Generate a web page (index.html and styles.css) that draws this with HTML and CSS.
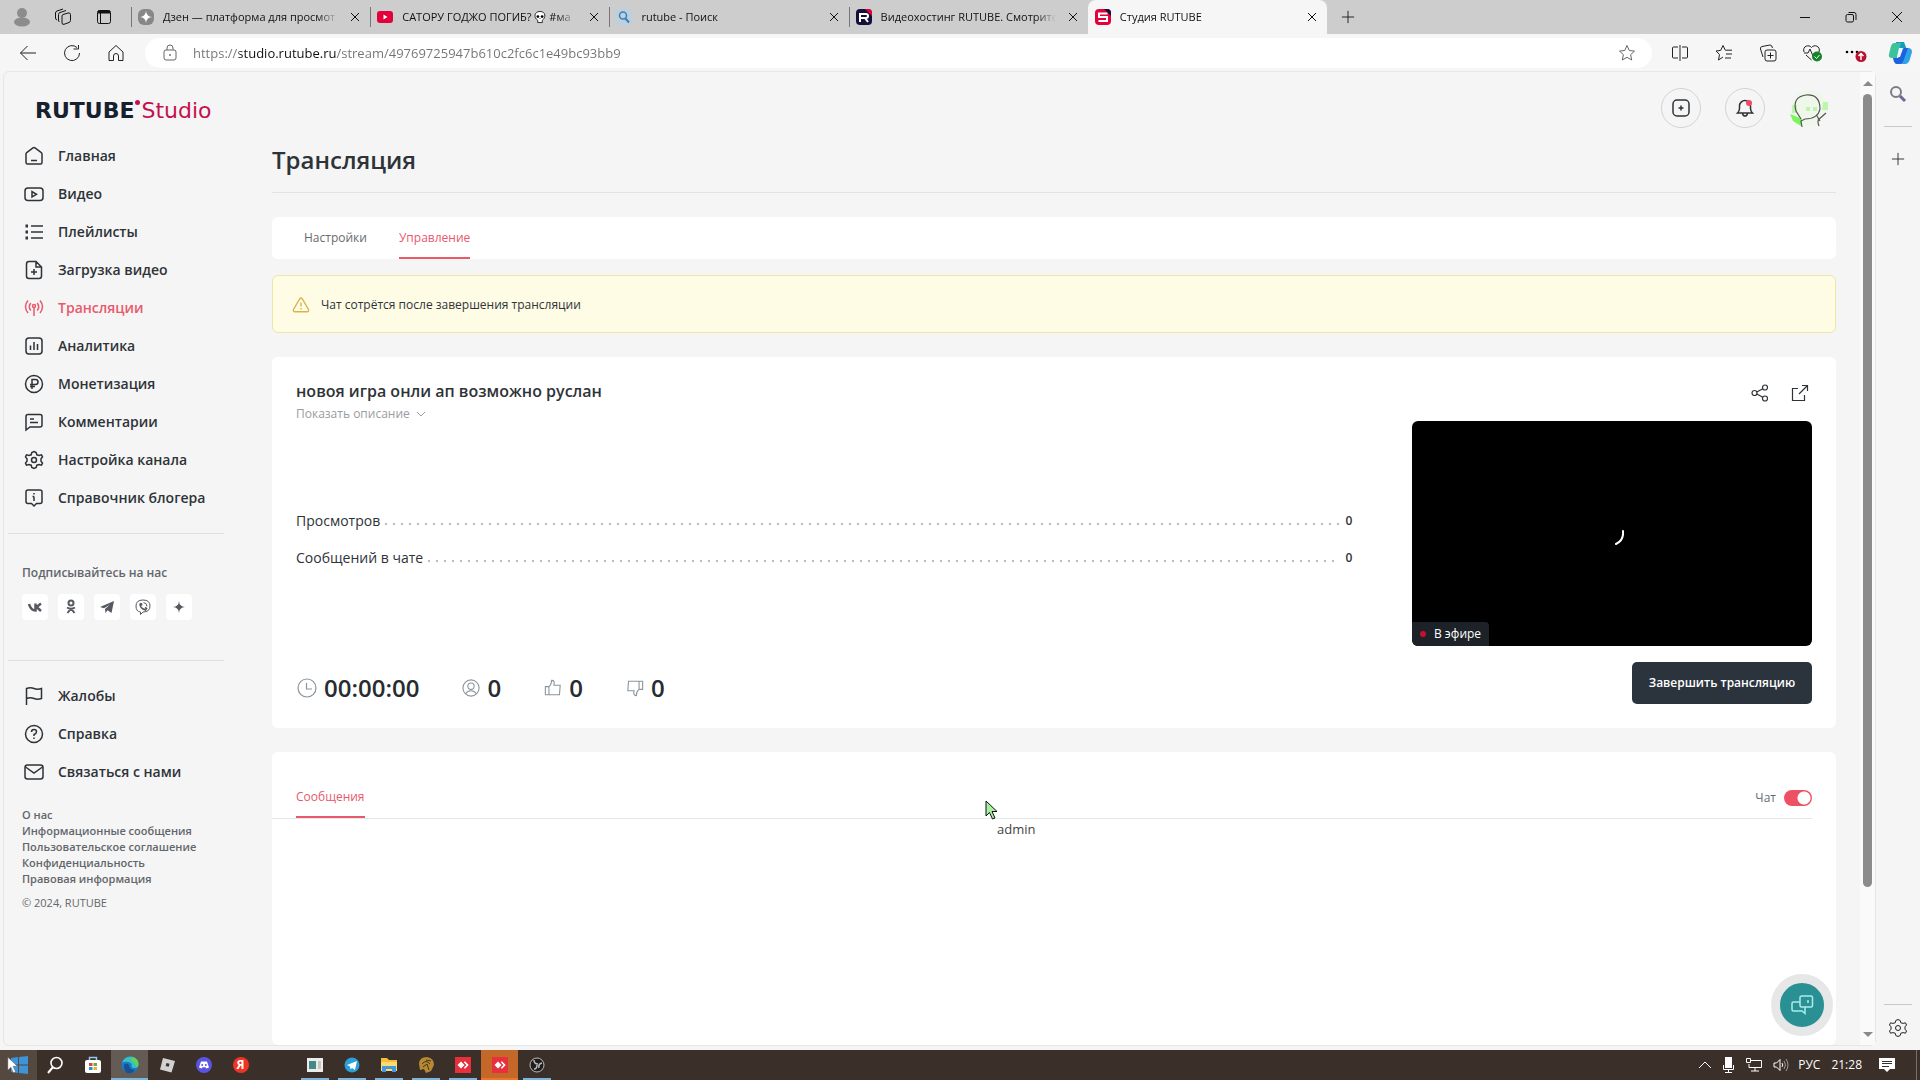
FILE: index.html
```html
<!DOCTYPE html>
<html lang="ru">
<head>
<meta charset="utf-8">
<meta name="viewport" content="width=device-width, initial-scale=1">
<title>Студия RUTUBE</title>
<link rel="stylesheet" href="styles.css">
</head>
<body>
<svg class="sprite" aria-hidden="true">
  <symbol id="x" viewBox="0 0 16 16"><path d="M4 4l8 8M12 4l-8 8"/></symbol>
  <symbol id="plus" viewBox="0 0 16 16"><path d="M8 1v14M1 8h14"/></symbol>
  <symbol id="gear" viewBox="0 0 20 20"><path d="M10 1.5l2.200 1 .6 2.300 2.300.6 2.400-.6 1 2.200-1.500 1.800v2.400l1.500 1.800-1 2.200-2.400-.6-2.300.6-.6 2.300-2.200 1-2.200-1-.6-2.300-2.300-.6-2.400.6-1-2.200L3 11.200V8.800L1.500 7l1-2.200 2.400.6 2.300-.6.6-2.300z"/><circle cx="10" cy="10" r="2.500"/></symbol>
  <symbol id="thumb" viewBox="0 0 20 20"><path d="M1.500 8.500h4v9h-4zM5.500 8.500c2-1.500 3-3.500 3-7 2.500 0 3.500 1.500 2.500 5.500h7l-.8 10.500H5.500"/></symbol>
  <symbol id="desk" viewBox="0 0 16 16"><path fill="#e8303c" d="M0 0h16v16H0z"/><path fill="#fff" d="M6 4.500L9.500 8 6 11.500 2.500 8zM9 4.500h1L13.500 8 10 11.500H9L12 8z"/><path stroke="#fff" stroke-width="1.500" fill="none" d="M9.500 5l3 3-3 3"/></symbol>
</svg>

<header class="tabstrip">
  <div class="strip-tools">
    <button class="icon-btn" aria-label="Профиль"><svg width="18" height="20" viewBox="0 0 18 20"><g fill="#8c8c8c"><circle cx="9" cy="6" r="5"/><ellipse cx="9" cy="15" rx="8" ry="4.500"/></g></svg></button>
    <button class="icon-btn" aria-label="Рабочие области"><svg class="line" width="18" height="18" viewBox="0 0 18 18"><path d="M9 6.500l5-1.500q2.500-.5 2.500 1.500v6q0 1.500-1.500 2l-5 1.800q-2 .5-2-1.500V8q0-1 1-1.500zM5.500 14Q4.500 13.500 4.500 12V6.500Q4.500 5 6 4.500L12 2.500M3 12q-1.500-.5-1.500-2V5Q1.500 3.500 3 3l6-2"/></svg></button>
    <button class="icon-btn" aria-label="Меню вкладок"><svg class="line" width="16" height="16" viewBox="0 0 16 16"><rect x="1.500" y="1.500" width="13" height="13" rx="2"/><path stroke-width="3" d="M2 3h12"/><path d="M4.500 3v11"/></svg></button>
  </div>
  <nav class="tabs" aria-label="Вкладки браузера">
    <div class="tab"><svg width="16" height="16" viewBox="0 0 16 16"><rect width="16" height="16" rx="6" fill="#878787"/><path fill="#fff" d="M8 2q.5 5.500 6 6-5.500.5-6 6-.5-5.500-6-6 5.500-.5 6-6z"/></svg><span class="tab-title">Дзен — платформа для просмот</span><button aria-label="Закрыть вкладку"><svg class="line" width="16" height="16"><use href="#x"/></svg></button></div>
    <div class="tab"><svg width="16" height="16" viewBox="0 0 16 16"><rect y="2" width="16" height="12" rx="3" fill="#e4003a"/><path fill="#fff" d="M6.500 5.500v5l4-2.500z"/></svg><span class="tab-title">САТОРУ ГОДЖО ПОГИБ? <svg class="skull" width="12" height="14" viewBox="0 0 13 14"><path fill="#fff" stroke="#222" d="M4 10.500C-.5 8 0 1 6.500 1S13 8 9 10.500V13H4z"/><circle cx="4.200" cy="6.500" r="1.500"/><circle cx="8.800" cy="6.500" r="1.500"/><path d="M6.500 8l-.8 1.300h1.600z"/></svg> #ма</span><button aria-label="Закрыть вкладку"><svg class="line" width="16" height="16"><use href="#x"/></svg></button></div>
    <div class="tab"><svg width="16" height="16" viewBox="0 0 16 16"><rect width="16" height="16" fill="#bcd0de"/><circle cx="7" cy="6.500" r="3.500" fill="none" stroke="#3d7fb8" stroke-width="1.500"/><path stroke="#3d7fb8" stroke-width="2" d="M9.500 9.500l3.500 4"/></svg><span class="tab-title">rutube - Поиск</span><button aria-label="Закрыть вкладку"><svg class="line" width="16" height="16"><use href="#x"/></svg></button></div>
    <div class="tab"><svg width="16" height="16" viewBox="0 0 16 16"><rect width="16" height="16" rx="4" fill="#12103a"/><path fill="#e4003a" d="M9 0h3a4 4 0 014 4v3z"/><path fill="none" stroke="#fff" stroke-width="2" d="M4 13V5h6q2 0 2 2t-2 2H4M9 9l3 4"/></svg><span class="tab-title">Видеохостинг RUTUBE. Смотрите</span><button aria-label="Закрыть вкладку"><svg class="line" width="16" height="16"><use href="#x"/></svg></button></div>
    <div class="tab tab-active" aria-current="page"><svg width="16" height="16" viewBox="0 0 16 16"><rect width="16" height="16" rx="4" fill="#e4003a"/><path fill="#12103a" d="M9 0h3a4 4 0 014 4v3z"/><path fill="none" stroke="#fff" stroke-width="2" d="M12.500 4.500H4v3.500h8v4H3.500"/></svg><span class="tab-title">Студия RUTUBE</span><button aria-label="Закрыть вкладку"><svg class="line" width="16" height="16"><use href="#x"/></svg></button></div>
  </nav>
  <button class="icon-btn new-tab" aria-label="Новая вкладка"><svg class="line" width="14" height="14"><use href="#plus"/></svg></button>
  <div class="window-tools">
    <button class="icon-btn" aria-label="Свернуть"><svg class="line" width="12" height="12"><path d="M1 6.500h10"/></svg></button>
    <button class="icon-btn" aria-label="Восстановить"><svg class="line" width="12" height="12" viewBox="0 0 12 12"><rect x="1" y="3.500" width="7.500" height="7.500" rx="1.500"/><path d="M3.500 1.500H9q2 0 2 2V9"/></svg></button>
    <button class="icon-btn" aria-label="Закрыть"><svg class="line" width="12" height="12" viewBox="0 0 12 12"><path d="M1 1l10 10M11 1L1 11"/></svg></button>
  </div>
</header>

<div class="toolbar">
  <div class="nav-tools">
    <button class="icon-btn" aria-label="Назад"><svg class="line" width="18" height="18" viewBox="0 0 18 18"><path d="M17 9H1.500M8.500 2L1.500 9l7 7"/></svg></button>
    <button class="icon-btn" aria-label="Обновить"><svg class="line" width="18" height="18" viewBox="0 0 18 18"><path d="M16.500 9A7.500 7.500 0 1114 3.500M10.500 5h5V1"/></svg></button>
    <button class="icon-btn" aria-label="Домой"><svg class="line" width="18" height="18" viewBox="0 0 18 18"><path d="M2 8l7-6.500L16 8v8.500h-4.500V12a2.500 2.500 0 00-5 0v4.500H2z"/></svg></button>
  </div>
  <label class="address">
    <svg class="line" width="14" height="18" viewBox="0 0 14 18"><rect x="1" y="6" width="12" height="10" rx="2"/><path d="M4 6V4a3 3 0 016 0v2"/><circle cx="7" cy="11" r=".6"/></svg>
    <input class="url" type="text" aria-label="Адрес" value="https://studio.rutube.ru/stream/49769725947b610c2fc6c1e49bc93bb9">
    <svg class="line" width="18" height="18" viewBox="0 0 18 18"><path d="M9 1.500l2.300 5 5.200.6-3.900 3.600 1.100 5.300L9 13.300 4.300 16l1.100-5.300L1.500 7.100l5.200-.6z"/></svg>
  </label>
  <div class="ext-tools">
    <button class="icon-btn" aria-label="Разделить экран"><svg class="line" width="18" height="18" viewBox="0 0 18 18"><path d="M7 3H2.500Q1.500 3 1.500 4v9q0 1 1 1H7M11 3h4.500q1 0 1 1v9q0 1-1 1H11M9 1v16"/></svg></button>
    <button class="icon-btn" aria-label="Избранное"><svg class="line" width="18" height="18" viewBox="0 0 18 18"><path d="M8 13l-4.500 3 1-5.500L1 7l4.700-.6L8 1.500l2.300 4.700H17M11 10h6M10 14h6"/></svg></button>
    <button class="icon-btn" aria-label="Коллекции"><svg class="line" width="18" height="18" viewBox="0 0 18 18"><rect x="6" y="6" width="11" height="11" rx="2"/><path d="M11.500 8.500v6M8.500 11.500h6M4 13l-2.500-8q-.5-2 1.500-2.500L11 1q2 0 2.500 3"/></svg></button>
    <button class="icon-btn" aria-label="Производительность"><svg class="line" width="20" height="18" viewBox="0 0 20 18"><path d="M2 8C0 2 7 0 9.500 3.500 12 0 19 2 17 8M2 9h4l2-4 3 7 1.500-3M4 11l5.500 5"/><circle cx="15" cy="12.500" r="5" fill="#168529" stroke="none"/><path stroke="#fff" d="M12.500 12.500l2 2 3-3.500"/></svg></button>
    <button class="icon-btn" aria-label="Меню"><svg width="22" height="18" viewBox="0 0 22 18"><circle cx="2" cy="8" r="1.300"/><circle cx="7" cy="8" r="1.300"/><circle cx="12" cy="8" r="1.300"/><circle cx="16" cy="12.500" r="5.500" fill="#b9112f"/><path fill="none" stroke="#fff" stroke-width="1.500" d="M16 16V9.500M13.500 12L16 9.500l2.500 2.500"/></svg></button>
    <button class="icon-btn" aria-label="Copilot"><svg width="24" height="24" viewBox="0 0 24 24"><path fill="#159cc0" d="M8 1h8l3 8H9z"/><path fill="#3cc39a" d="M6 2h7l-4 15H4q-4 0-3-4L3 5q1-3 3-3z"/><path fill="#2ea3e8" d="M11 23h7q3-1 4-5l2-7q0-4-4-4h-5z"/><path fill="#1d62dc" d="M5 17h5l6-10h4l-5 14q-1 2-4 2H9q-3 0-4-6z"/><path fill="#e8f6ff" d="M11 7h4l-3 9H9z"/></svg></button>
  </div>
</div>

<div class="workspace">
  <div class="page">
    <aside class="sidebar">
      <a class="logo" href="#" aria-label="RUTUBE Studio"><b>RUTUBE</b><i></i><span>Studio</span></a>
      <nav class="menu">
        <a href="#"><svg class="line" width="20" height="20" viewBox="0 0 20 20"><path d="M2 8q0-1 1-1.600l6-4.600q1-.7 2 0l6 4.600q1 .6 1 1.600v8.500q0 1.500-1.500 1.500h-13Q2 18 2 16.500zM7 14.500h6"/></svg>Главная</a>
        <a href="#"><svg class="line" width="20" height="20" viewBox="0 0 20 20"><rect x="1" y="4" width="18" height="12.500" rx="3"/><path d="M8 7.500v5.500l4.500-2.700z"/></svg>Видео</a>
        <a href="#"><svg class="line" width="20" height="20" viewBox="0 0 20 20"><path d="M7 4h12M7 10h12M7 16h12"/><path stroke-width="3" d="M1.500 4h2.500M1.500 10h2.500M1.500 16h2.500"/></svg>Плейлисты</a>
        <a href="#"><svg class="line" width="20" height="20" viewBox="0 0 20 20"><path d="M5 1.500h7L17.500 7v9q0 2.500-2.500 2.500H5Q2.500 18.500 2.500 16V4Q2.500 1.500 5 1.500zM12 2v5h5M10 9v6M7 12h6"/></svg>Загрузка видео</a>
        <a class="current" href="#"><svg class="line" width="20" height="20" viewBox="0 0 20 20"><path d="M4 2.500q-5 6 0 12.500M6.800 5q-3 4 0 7.500M16 2.500q5 6 0 12.500M13.200 5q3 4 0 7.500M10 9v9"/><circle cx="10" cy="8" r="1.500"/></svg>Трансляции</a>
        <a href="#"><svg class="line" width="20" height="20" viewBox="0 0 20 20"><rect x="2" y="2" width="16" height="16" rx="3"/><path d="M6.500 14V9.500M10 14V6M13.500 14V8"/></svg>Аналитика</a>
        <a href="#"><svg class="line" width="20" height="20" viewBox="0 0 20 20"><circle cx="10" cy="10" r="8.500"/><path d="M8 15V5.500h3.500q2.500 0 2.500 2.500t-2.500 2.500H6M6 12.500h5"/></svg>Монетизация</a>
        <a href="#"><svg class="line" width="20" height="20" viewBox="0 0 20 20"><path d="M4 2.500h12q2 0 2 2V13q0 2-2 2H6l-4 3V4.500q0-2 2-2zM6 7h4M6 10.500h8"/></svg>Комментарии</a>
        <a href="#"><svg class="line" width="20" height="20"><use href="#gear"/></svg>Настройка канала</a>
        <a href="#"><svg class="line" width="20" height="20" viewBox="0 0 20 20"><path d="M4 2h12q2 0 2 2v9.500q0 2-2 2h-3.500L10 18l-2.500-2.500H4q-2 0-2-2V4q0-2 2-2zM10 8.500V13M10 5v1.500M8.500 8.500H10"/></svg>Справочник блогера</a>
      </nav>
      <section class="follow">
        <h2>Подписывайтесь на нас</h2>
        <div class="social">
          <a href="#" aria-label="VK"><svg width="14" height="14" viewBox="0 0 14 14"><path fill="none" stroke="currentColor" stroke-width="2.500" d="M1 4q2 6.500 6.500 6.500V3.500M13 3.500L8.500 7l4.500 4"/></svg></a>
          <a href="#" aria-label="Одноклассники"><svg width="14" height="16" viewBox="0 0 14 16"><g fill="none" stroke="currentColor" stroke-width="2"><circle cx="7" cy="4" r="2.500"/><path d="M3 8.500q4 2.500 8 0M7 9.500l-3.500 4.500M7 9.500l3.500 4.500"/></g></svg></a>
          <a href="#" aria-label="Telegram"><svg width="14" height="14" viewBox="0 0 14 14"><path d="M0 7l14-6-2.500 12-4-2.800L5.500 13 5 9l5-4.500L4 8.200z"/></svg></a>
          <a href="#" aria-label="Viber"><svg width="16" height="16" viewBox="0 0 16 16"><path fill="none" stroke="currentColor" d="M5.500 13Q1 12.500 1 7q0-6 7-6t7 6-7 6l-2.500 2.500z"/><path fill="none" stroke="currentColor" stroke-width="1.600" d="M5 4.500q0 5 5.500 6.500l1-1.500-1.500-1M5 4.500l1.500.5.500 1.500"/><path fill="none" stroke="currentColor" d="M8.500 3.500q3.500.5 3.500 4"/></svg></a>
          <a href="#" aria-label="Дзен"><svg width="14" height="14" viewBox="0 0 14 14"><path d="M7 1q.3 5.700 6 6-5.700.3-6 6-.3-5.700-6-6 5.700-.3 6-6z"/><circle cx="7" cy="7" r="2"/></svg></a>
        </div>
      </section>
      <nav class="menu">
        <a href="#"><svg class="line" width="20" height="20" viewBox="0 0 20 20"><path d="M2.500 19V2.500q4-1.500 7.500 0t7.500 0v10q-4 1.500-7.500 0t-7.500 0"/></svg>Жалобы</a>
        <a href="#"><svg class="line" width="20" height="20" viewBox="0 0 20 20"><circle cx="10" cy="10" r="8.500"/><path d="M7.500 8q0-2.500 2.500-2.500t2.500 2.200Q12.500 9.500 10 10.500V12M10 13.500V15"/></svg>Справка</a>
        <a href="#"><svg class="line" width="20" height="20" viewBox="0 0 20 20"><rect x="1" y="3" width="18" height="14" rx="2.500"/><path d="M1.500 5L10 11l8.500-6"/></svg>Связаться с нами</a>
      </nav>
      <footer class="legal">
        <a href="#">О нас</a><a href="#">Информационные сообщения</a><a href="#">Пользовательское соглашение</a><a href="#">Конфиденциальность</a><a href="#">Правовая информация</a>
        <small>© 2024, RUTUBE</small>
      </footer>
    </aside>

    <main class="content">
      <div class="account">
        <button class="round" aria-label="Добавить"><svg class="line" width="20" height="20" viewBox="0 0 20 20"><rect x="2" y="2" width="16" height="16" rx="4"/><path d="M10 7.500v5M7.500 10h5"/></svg></button>
        <button class="round" aria-label="Уведомления"><svg class="line" width="20" height="20" viewBox="0 0 20 20"><path d="M2.500 15q2-2 2-4.500V8a5.500 5.500 0 0111 0v2.500q0 2.500 2 4.500zM7.500 15.500q.5 2.500 2.500 2.500t2.500-2.500"/><circle cx="14" cy="5" r="3" fill="#ee4b62" stroke="none"/></svg></button>
        <button class="avatar" aria-label="Мой канал"><svg width="40" height="40" viewBox="0 0 40 40"><circle cx="20" cy="20" r="18" fill="#eff7eb"/><path fill="#7af55c" d="M1 26l12 5-1 7-8-5z"/><path fill="#bdf5ae" d="M3 17h5v8H3zM34 14h5v8h-6zM17 19h4v4h-4zM24 19h4v4h-4z"/><path fill="none" stroke="#555" stroke-width="1.200" d="M12 31l-5-8Q3 9 17 7q14-1 14 14-2 10-15 10l-4 2 1 6M30 38q-2-5 0-7M29 32l8-7M28 28l3 5"/></svg></button>
      </div>
      <h1>Трансляция</h1>
      <nav class="card section-tabs"><a href="#">Настройки</a><a class="selected" href="#">Управление</a></nav>
      <p class="notice"><svg width="18" height="16" viewBox="0 0 18 16"><path fill="none" stroke="#d9b44a" stroke-width="1.400" d="M7.800 1.700q1.200-1.500 2.400 0l6.300 10.800q.6 2-1.500 2.200H3q-2.100-.2-1.500-2.200zM9 5.500v4M9 11v1.500"/></svg>Чат сотрётся после завершения трансляции</p>

      <section class="card stream">
        <div class="details">
          <h2>новоя игра онли ап возможно руслан</h2>
          <button class="more">Показать описание<svg class="line" width="10" height="10" viewBox="0 0 10 10"><path d="M1 3l4 4 4-4"/></svg></button>
          <dl class="metrics">
            <div><dt>Просмотров</dt><dd>0</dd></div>
            <div><dt>Сообщений в чате</dt><dd>0</dd></div>
          </dl>
          <div class="counters">
            <span class="timer"><svg class="line" width="20" height="20" viewBox="0 0 20 20"><circle cx="10" cy="10" r="9"/><path d="M9.500 5v6H15"/></svg>00:00:00</span>
            <span><svg class="line" width="18" height="18" viewBox="0 0 20 20"><circle cx="10" cy="10" r="9"/><circle cx="10" cy="8" r="3.500"/><path d="M4 16.500q2-3.500 6-3.500t6 3.500"/></svg>0</span>
            <span><svg class="line" width="18" height="18"><use href="#thumb"/></svg>0</span>
            <span><svg class="line flip" width="18" height="18"><use href="#thumb"/></svg>0</span>
          </div>
        </div>
        <div class="preview">
          <div class="actions">
            <button class="icon-btn" aria-label="Поделиться"><svg class="line" width="18" height="18" viewBox="0 0 18 18"><circle cx="3.500" cy="9" r="2.500"/><circle cx="14" cy="3.500" r="2.500"/><circle cx="14" cy="14.500" r="2.500"/><path d="M5.800 8l6-3.300M5.800 10l6 3.300"/></svg></button>
            <button class="icon-btn" aria-label="Открыть"><svg class="line" width="18" height="18" viewBox="0 0 18 18"><path d="M7 4.500H1.500v12h12V11M8 10l8-8M11 1.500h5.500V7"/></svg></button>
          </div>
          <div class="video"><svg width="24" height="24" viewBox="0 0 24 24"><path fill="none" stroke="#fff" stroke-width="2" stroke-linecap="round" d="M23 9q1 9-7 13"/></svg><span class="live">В эфире</span></div>
          <button class="finish">Завершить трансляцию</button>
        </div>
      </section>

      <section class="card chat">
        <div class="chat-head">
          <a class="selected" href="#">Сообщения</a>
          <label class="switch">Чат<input type="checkbox" checked></label>
        </div>
      </section>
    </main>

    <div class="scrollbar" aria-hidden="true"><i class="up"></i><i class="thumb"></i><i class="down"></i></div>
    <button class="support" aria-label="Поддержка"><svg width="24" height="24" viewBox="0 0 24 24"><path fill="none" stroke="#a9edf0" stroke-width="1.500" d="M11 3h10q1.500 0 1.500 1.500v8Q22.500 14 21 14h-9.500Q10 14 10 12.500v-8Q10 3 11.500 3M10 9H3.500Q2 9 2 10.500v6Q2 18 3.500 18H12l3 2.500V14M15 8h.1M18 7v3"/></svg></button>
  </div>
  <aside class="edge-bar">
    <button class="icon-btn" aria-label="Поиск"><svg width="18" height="18" viewBox="0 0 18 18"><circle cx="7" cy="7" r="5" fill="none" stroke="#7c7c84" stroke-width="2"/><path stroke="#68689a" stroke-width="3" d="M11 11l5 5"/></svg></button>
    <hr>
    <button class="icon-btn" aria-label="Настроить"><svg class="line" width="14" height="14"><use href="#plus"/></svg></button>
    <hr class="last">
    <button class="icon-btn" aria-label="Параметры"><svg class="line" width="20" height="20"><use href="#gear"/></svg></button>
  </aside>
</div>

<footer class="taskbar">
  <button class="start" aria-label="Пуск"><svg width="18" height="18" viewBox="0 0 18 18"><path fill="#3f94d8" d="M1 2l7-1v7.500H1zM9 1l9-1v8.500H9zM1 9.500h7V17l-7-1zM9 9.500h9V18l-9-1z"/></svg></button>
  <button aria-label="Поиск"><svg width="18" height="18" viewBox="0 0 18 18"><path fill="none" stroke="#fff" stroke-width="2" d="M1 17l5-6"/><circle cx="9.500" cy="7" r="5.500" fill="none" stroke="#fff" stroke-width="1.600"/></svg></button>
  <button aria-label="Магазин"><svg width="16" height="18" viewBox="0 0 16 18"><path fill="none" stroke="#8dc9f0" stroke-width="1.500" d="M4.500 5V1.500h7V5"/><rect y="4" width="16" height="13" rx="2" fill="#fff"/><path fill="#d9482e" d="M4 7h3.500v3H4z"/><path fill="#6bab3a" d="M8.500 7H12v3H8.500z"/><path fill="#2b8fd6" d="M4 11h3.500v3H4z"/><path fill="#eab431" d="M8.500 11H12v3H8.500z"/></svg></button>
  <button class="active open" aria-label="Edge"><svg width="18" height="18" viewBox="0 0 18 18"><circle cx="9" cy="9" r="8.500" fill="#1b78c8"/><path fill="#35c0c4" d="M1 7Q3 .5 9.500.5T17.500 8q0 4-4 4-3 0-3-2 1-3-3-4Q3 5 1 7z"/><path fill="#62cf62" d="M12 1q5.500 2 5.500 7 0 3-2 3.700Q14 6 9 4z"/><path fill="#17508f" d="M3 9q3-3 5 0 0 5 6 5-3 4-8 3-3-2-3-8z"/></svg></button>
  <button aria-label="Roblox"><svg width="16" height="16" viewBox="0 0 16 16"><path fill="#d2d2d2" d="M4 1l12 3-3.500 11.500L1 12.500z"/><path fill="#3b2f29" d="M7.500 6l3 .8-.8 3-3-.8z"/></svg></button>
  <button aria-label="Discord"><svg width="18" height="18" viewBox="0 0 18 18"><circle cx="9" cy="9" r="8" fill="#5a55e0"/><path fill="#fff" d="M6 5.500h6l2 6-2.500 1-1-1.200h-3l-1 1.200-2.500-1z"/><circle cx="7.200" cy="9" r="1" fill="#5a55e0"/><circle cx="10.800" cy="9" r="1" fill="#5a55e0"/></svg></button>
  <button aria-label="Яндекс"><span class="yandex">Я</span></button>
  <span class="task-gap"></span>
  <button class="open" aria-label="Приложение"><svg width="16" height="14" viewBox="0 0 16 14"><rect width="16" height="14" fill="#ececec"/><path fill="#428a88" d="M2 3h7v8H2z"/><path fill="#c6c6c6" d="M11 3h3v8h-3z"/></svg></button>
  <button class="open" aria-label="Telegram"><svg width="16" height="16" viewBox="0 0 16 16"><circle cx="8" cy="8" r="7.500" fill="#2a9fd8"/><path fill="#fff" d="M3 8l10-4-2 9-3-2-1.500 1.500L6 9.500z"/></svg></button>
  <button class="open" aria-label="Проводник"><svg width="18" height="16" viewBox="0 0 18 16"><path fill="#f5bd3b" d="M1 1h6l2 2h8v4H1z"/><path fill="#fbdc74" d="M1 5h16v9H1z"/><path fill="#4698dc" d="M2 9h14v6h-4v-3H6v3H2z"/></svg></button>
  <button class="open" aria-label="Игра"><svg width="16" height="18" viewBox="0 0 16 18"><path fill="#b58a33" d="M1 8q0-7 8-7 7 1 7 8l-3 6-5 2-2-4-4 1z"/><path fill="none" stroke="#483319" d="M4 8q4-5 8 0M5 11l4-3 2 6M8 4l5 1"/></svg></button>
  <button class="open" aria-label="AnyDesk"><svg width="16" height="16"><use href="#desk"/></svg></button>
  <button class="open alert" aria-label="AnyDesk, сеанс"><svg width="16" height="16"><use href="#desk"/></svg></button>
  <button class="open" aria-label="OBS Studio"><svg width="16" height="16" viewBox="0 0 16 16"><circle cx="8" cy="8" r="7" fill="#211d1b" stroke="#bbb"/><path fill="none" stroke="#bbb" stroke-width="1.500" d="M5 3q0 4 4 4M13 6q-4 1-3 5M5 12q3 0 3-4"/></svg></button>
  <div class="tray">
    <svg class="line" width="14" height="10" viewBox="0 0 14 10"><path d="M1 8l6-6 6 6"/></svg>
    <svg width="12" height="16" viewBox="0 0 12 16"><rect x="2" width="7" height="11" fill="#fff"/><path fill="none" stroke="#fff" d="M.5 8v4.500h10V8M5.500 12.500V15M2 15.500h7"/></svg>
    <svg class="line" width="16" height="14" viewBox="0 0 16 14"><path d="M5 2.500h10.500v7H3V6M9 9.500V13M5 13h8M.5.500h4v4h-4z"/></svg>
    <svg class="line" width="16" height="14" viewBox="0 0 16 14"><path d="M1 5v4h2.500L7 12.500v-11L3.500 5zM9 5q1.500 2 0 4"/><path opacity=".5" d="M11 3q3 4 0 8M13 1q4 6 0 12"/></svg>
    <span class="lang">РУС</span>
    <time>21:28</time>
    <svg class="note" width="16" height="16" viewBox="0 0 16 16"><path fill="#fff" d="M0 1h16v11h-5l-3 3-3-3H0z"/><path stroke="#3b2f29" d="M3 4.500h10M3 6.500h10M3 9.500h7"/></svg>
  </div>
</footer>

<div class="remote-pointer"><svg width="14" height="20" viewBox="0 0 14 20"><path fill="#a6f0a2" stroke="#111" d="M1 1v15l3.500-3.500L7.500 19l2.500-1-3-6.500h5z"/></svg><span>admin</span></div>
<svg class="pointer" width="12" height="18" viewBox="0 0 14 20" aria-hidden="true"><path fill="#fff" stroke="#555" stroke-width=".5" d="M1 1v15l3.500-3.500L7.500 19l2.500-1-3-6.500h5z"/></svg>
</body>
</html>
```
FILE: styles.css
```css
* { box-sizing: border-box; }

body {
  margin: 0;
  min-height: 100vh;
  display: flex;
  flex-direction: column;
  background: #f5f5f5;
  color: #2e3338;
  font-family: "Open Sans", "Noto Sans", sans-serif;
  font-size: 12px;
  line-height: 16px;
}

a { color: inherit; text-decoration: none; }
button { margin: 0; padding: 0; border: 0; background: none; color: inherit; font: inherit; }
h1, h2, p, dl, dd { margin: 0; }
svg { flex: none; }
.sprite { position: absolute; width: 0; height: 0; }
.line { fill: none; stroke: currentColor; }
.icon-btn { display: grid; place-items: center; width: 24px; height: 24px; }

/* Browser tabs */
.tabstrip { display: flex; align-items: center; height: 34px; background: #cdcdcd; color: #111; }
.strip-tools { display: flex; gap: 17px; width: 131px; padding-left: 10px; }
.tabs { display: flex; flex: 0 1 1196px; min-width: 0; height: 100%; }
.tab { display: flex; flex: 1; align-items: center; gap: 9px; min-width: 0; padding-right: 7px; }
.tab::before { content: ""; width: 1px; height: 20px; margin-right: -9px; background: #777; }
.tab > svg { margin-left: 6px; }
.tab button { display: grid; }
.tab-title { flex: 1; min-width: 0; overflow: hidden; white-space: nowrap; font-size: 11px; -webkit-mask-image: linear-gradient(to left, transparent, #000 20px); mask-image: linear-gradient(to left, transparent, #000 20px); }
.tab-active { background: #f6f6f6; border-radius: 8px 8px 0 0; }
.tab-active::before { background: none; }
.skull { vertical-align: -3px; }
.new-tab { margin-left: 9px; }
.window-tools { display: flex; gap: 22px; margin-left: auto; padding-right: 11px; }

/* Address row */
.toolbar { display: flex; align-items: center; height: 37px; background: #f6f6f6; color: #222; }
.nav-tools { display: flex; gap: 20px; padding-left: 16px; width: 145px; }
.address { display: flex; flex: 1; align-items: center; height: 30px; padding: 0 16px 0 18px; border-radius: 15px; background: #fff; color: #666; }
.url {
  flex: 1;
  min-width: 0;
  margin: 0 16px;
  padding: 0;
  border: 0;
  outline: 0;
  font: 13px/20px "Open Sans", "Noto Sans", sans-serif;
  color: transparent;
  background: linear-gradient(90deg, #737373 46px, #111 46px, #111 143px, #737373 143px);
  -webkit-background-clip: text;
  background-clip: text;
}
.ext-tools { display: flex; gap: 20px; padding: 0 10px 0 16px; }
.ext-tools .icon-btn:last-child { width: 22px; }

/* Page frame */
.workspace { display: flex; flex: 1; }
.page { position: relative; display: flex; flex: 1; min-width: 0; margin: 0 0 4px 3px; border: 1px solid #e6e6e6; border-radius: 6px; background: #f5f5f5; }
.edge-bar { display: flex; flex-direction: column; align-items: center; width: 44px; padding: 11px 0 10px; color: #222; }
.edge-bar hr { width: 28px; margin: 20px 0; border: 0; border-top: 1px solid #c8c8c8; }
.edge-bar .last { margin: auto 0 11px; }

/* Studio sidebar */
.sidebar { width: 220px; padding-top: 28px; }
.logo { display: flex; align-items: center; height: 21px; padding-left: 31px; font: 22px/21px "DejaVu Sans", sans-serif; color: #c4104f; }
.logo b { color: #16202e; }
.logo i { align-self: flex-start; width: 5px; height: 5px; margin: 0 1px; border-radius: 50%; background: #c4104f; }
.menu { margin-left: 4px; padding-top: 16px; font-size: 14px; font-weight: 600; }
.menu a { display: flex; align-items: center; gap: 14px; height: 38px; padding-left: 16px; }
.menu .line { stroke-width: 1.5px; }
.current, .selected { color: #e8596c; }
.follow { margin: 16px 0 0 4px; padding: 31px 0 40px 14px; border: solid #dfdfdf; border-width: 1px 0; }
.follow h2 { color: #62666b; font-size: 12px; font-weight: 600; }
.social { display: flex; gap: 10px; margin-top: 13px; }
.social a { display: grid; place-items: center; width: 26px; height: 26px; border-radius: 4px; background: #fff; color: #555a60; fill: currentColor; }
.legal { display: flex; flex-direction: column; padding: 16px 0 16px 18px; color: #62666b; font-size: 11px; font-weight: 600; }
.legal small { margin-top: 8px; font-size: 11px; font-weight: 400; }

/* Content */
.content { display: flex; flex: 1; flex-direction: column; min-width: 0; padding: 16px 24px 0 48px; }
.account { display: flex; justify-content: flex-end; gap: 24px; padding-right: 7px; }
.round { display: grid; place-items: center; width: 40px; height: 40px; border: 1px solid #d4d4d6; border-radius: 50%; }
.round .line { stroke-width: 1.5px; }
.avatar { display: grid; width: 40px; height: 40px; }
h1 { margin: 16px 0 24px; padding-bottom: 16px; border-bottom: 1px solid #e2e2e2; font-size: 24px; line-height: 32px; font-weight: 600; }
.card { border-radius: 6px; background: #fff; }
.section-tabs { display: flex; gap: 32px; height: 42px; padding: 0 32px; color: #666b70; }
.section-tabs a { padding-top: 13px; }
.section-tabs .selected, .chat-head .selected { border-bottom: 2px solid #e8596c; color: #e8596c; }
.notice { display: flex; align-items: center; gap: 11px; height: 58px; margin: 16px 0 24px; padding: 1px 19px 0; border: 1px solid #efe6a6; border-radius: 6px; background: #fefce5; }

.stream { display: flex; gap: 56px; padding: 24px; }
.details { display: flex; flex: 1; flex-direction: column; align-items: flex-start; min-width: 0; }
.details h2 { font-size: 16px; line-height: 21px; font-weight: 600; }
.more { display: flex; align-items: center; gap: 6px; height: 23px; color: #989da2; }
.metrics { width: 100%; margin: auto 0; padding-bottom: 18px; font-size: 14px; }
.metrics div { display: flex; align-items: center; gap: 2px; height: 37px; }
.metrics div::before { content: ""; order: 1; flex: 1; height: 10px; background: radial-gradient(circle at 4px 8px, #b9bdc0 1px, transparent 1px) 0 0 / 8px 10px; }
.metrics dd { order: 2; width: 14px; font-size: 12px; font-weight: 600; text-align: center; }
.counters { display: flex; gap: 43px; padding-left: 1px; font-size: 24px; line-height: 32px; font-weight: 600; color: #282c30; }
.counters span { display: flex; align-items: center; gap: 7px; }
.counters .line { color: #8b949d; stroke-width: 1.2px; }
.flip { transform: rotate(180deg); }
.preview { width: 400px; }
.actions { display: flex; justify-content: flex-end; gap: 16px; }
.actions .line { stroke-width: 1.2px; }
.video { position: relative; display: grid; place-items: center; height: 225px; margin: 16px 0; overflow: hidden; border-radius: 6px; background: #000; }
.live { position: absolute; left: 0; bottom: 0; display: flex; align-items: center; gap: 8px; height: 24px; padding: 0 8px; border-radius: 0 4px 0 0; background: #1d2128; color: #fff; }
.live::before { content: ""; width: 6px; height: 6px; border-radius: 50%; background: #c8102e; }
.finish { display: block; width: 180px; height: 42px; margin-left: auto; border-radius: 5px; background: #2b333c; color: #fff; font-weight: 600; }

.chat { flex: 1; min-height: 120px; margin-top: 24px; padding: 24px 24px 0 0; }
.chat-head { display: flex; justify-content: space-between; height: 43px; padding-left: 24px; border-bottom: 1px solid #e4e8ec; }
.chat-head .selected { padding-top: 13px; }
.switch { display: flex; align-items: center; gap: 8px; padding-top: 2px; color: #666b70; }
.switch input { appearance: none; width: 28px; height: 16px; margin: 0; border-radius: 8px; background: radial-gradient(circle at 20px 8px, #fff 6px, #ee5163 7px); }

.scrollbar { display: flex; flex-direction: column; align-items: center; gap: 8px; width: 15px; padding: 9px 0 8px; background: #fafafa; }
.scrollbar i { flex: none; }
.up, .down { border: solid transparent; border-width: 0 5px; }
.up { border-bottom: 5px solid #8a8a8a; }
.down { margin-top: auto; border-top: 5px solid #8a8a8a; }
.scrollbar .thumb { flex: 0 1 83%; width: 9px; border-radius: 5px; background: #8b8b8b; }
.support { position: absolute; right: 42px; bottom: 9px; display: grid; place-items: center; width: 62px; height: 62px; border: 9px solid #e7e7e7; border-radius: 50%; background: #2a9094; }

/* Taskbar */
.taskbar { display: flex; height: 30px; background: #3b2f29; color: #fff; }
.taskbar button { display: grid; place-items: center; width: 37px; }
.taskbar .start { background: #54483f; }
.taskbar .active { background: #655b55; }
.taskbar .open { background-image: linear-gradient(#7db4de, #7db4de); background-repeat: no-repeat; background-position: bottom; background-size: 28px 2px; }
.taskbar .active.open { background-size: 100% 2px; }
.taskbar .alert { background-color: #c4682a; background-image: linear-gradient(#f07428, #f07428); background-size: 100% 2px; }
.yandex { display: grid; place-items: center; width: 16px; height: 16px; border-radius: 50%; background: #f03325; font-weight: 700; }
.task-gap { width: 37px; }
.tray { display: flex; align-items: center; gap: 11px; margin-left: auto; margin-right: 3px; padding-right: 21px; border-right: 1px solid #79706b; }
.tray .lang { margin-left: -2px; }
.tray .note { margin-left: 6px; }

/* Pointers */
.remote-pointer { position: absolute; left: 985px; top: 800px; display: grid; }
.remote-pointer span { padding-left: 12px; font-size: 13px; line-height: 18px; color: #444; }
.pointer { position: absolute; left: 7px; bottom: 6px; }
```
